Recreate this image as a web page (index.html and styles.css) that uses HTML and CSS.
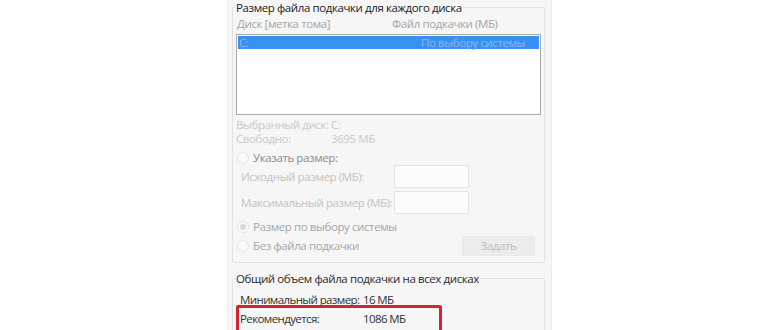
FILE: index.html
```html
<!DOCTYPE html>
<html lang="ru">
<head>
  <meta charset="UTF-8" />
  <title>Виртуальная память</title>
  <link rel="stylesheet" href="styles.css">
</head>
<body>

  <div class="window">
    <fieldset class="group">
      <legend>Размер файла подкачки для каждого диска</legend>

      <div class="cols">
        <span>Диск [метка тома]</span>
        <span>Файл подкачки (МБ)</span>
      </div>

      <div class="list">
        <div class="row selected">
          <span>C:</span>
          <span>По выбору системы</span>
        </div>
      </div>

      <div class="info">
        <span>Выбранный диск:</span><span>C:</span>
        <span>Свободно:</span><span>3695 МБ</span>
      </div>

      <label class="radio strong"><i class="dot"></i>Указать размер:</label>

      <div class="sizes">
        <span>Исходный размер (МБ):</span><span class="input"></span>
        <span>Максимальный размер (МБ):</span><span class="input"></span>
      </div>

      <label class="radio system"><i class="dot on"></i>Размер по выбору системы</label>

      <div class="last">
        <label class="radio"><i class="dot"></i>Без файла подкачки</label>
        <button class="btn" disabled>Задать</button>
      </div>
    </fieldset>

    <fieldset class="group total">
      <legend>Общий объем файла подкачки на всех дисках</legend>

      <div class="sum">
        <span>Минимальный размер:</span><span>16 МБ</span>
        <span>Рекомендуется:</span><span>1086 МБ</span>
        <span>Текущий размер:</span><span>1916 МБ</span>
      </div>

      <div class="mark"></div>
    </fieldset>
  </div>

</body>
</html>
```

FILE: styles.css
```css
* {
  box-sizing: border-box;
}

html, body {
  margin: 0;
  height: 330px;
  overflow: hidden;
  background: #ffffff;
}

body {
  font-family: 'Open Sans', 'Noto Sans', sans-serif;
  font-size: 11.5px;
  letter-spacing: -0.4px;
  line-height: 14px;
  color: #222;
  white-space: nowrap;
}

.window {
  margin-left: 227px;
  width: 325px;
  height: 330px;
  overflow: hidden;
  padding: 0 6px 0 4px;
  background: #f6f6f6;
  border-left: 1px solid #ececec;
  border-right: 1px solid #ececec;
}

.group {
  margin: 0;
  padding: 0 3px 6px 3px;
  border: 1px solid #e2e2e2;
  border-radius: 2px;
  min-width: 0;
}

.group legend {
  padding: 0 1px;
  margin-left: -1px;
  color: #1a1a1a;
  line-height: 15px;
}

.cols {
  display: grid;
  grid-template-columns: 155px 1fr;
  margin-top: 2px;
  padding-left: 1px;
  color: #a4a4a4;
}

.list {
  margin-top: 3px;
  height: 81px;
  padding: 1px;
  background: #fff;
  border: 1px solid #a9a9a9;
}

.row {
  display: grid;
  grid-template-columns: 182px 1fr;
  height: 13px;
  line-height: 13px;
  padding-left: 1px;
}

.row.selected {
  background: #3592f2;
  color: #8fb6e6;
}

.info {
  display: grid;
  grid-template-columns: 95px 1fr;
  margin-top: 3px;
  color: #c9c9c9;
}

.radio {
  display: flex;
  align-items: center;
  gap: 4px;
  height: 14px;
  padding-left: 1px;
  color: #a6a6a6;
}

.radio.strong {
  margin-top: 5px;
  color: #8a8a8a;
}

.radio.system {
  margin-top: 6px;
}

.dot {
  width: 12px;
  height: 12px;
  border-radius: 50%;
  border: 1px solid #e4e4e4;
  background: #fafafa;
  display: flex;
  align-items: center;
  justify-content: center;
}

.dot.on::after {
  content: '';
  width: 6px;
  height: 6px;
  border-radius: 50%;
  background: #d8d8d8;
}

.sizes {
  display: grid;
  grid-template-columns: 153px 75px;
  grid-auto-rows: 23px;
  row-gap: 3px;
  align-items: center;
  padding-left: 5px;
  color: #c2c2c2;
}

.input {
  height: 23px;
  background: #fcfcfc;
  border: 1px solid #e4e4e4;
}

.last {
  display: flex;
  align-items: center;
  height: 20px;
  margin-top: 2px;
}

.btn {
  margin-left: auto;
  margin-right: 6px;
  width: 73px;
  height: 20px;
  padding: 0;
  border: 1px solid #e8e8e8;
  border-radius: 2px;
  background: #ececec;
  color: #bdbdbd;
  font: inherit;
  letter-spacing: inherit;
}

.total {
  position: relative;
  margin-top: 8px;
  height: 70px;
}

.total legend {
  color: #2a2a2a;
}

.sum {
  display: grid;
  grid-template-columns: 123px 1fr;
  grid-auto-rows: 19px;
  align-items: center;
  margin-top: 4px;
  padding-left: 4px;
  color: #333;
  letter-spacing: -0.6px;
}

.mark {
  position: absolute;
  left: 3px;
  top: 19px;
  width: 206px;
  height: 60px;
  border: 3px solid #d4242c;
  border-radius: 2px;
  pointer-events: none;
}
```
